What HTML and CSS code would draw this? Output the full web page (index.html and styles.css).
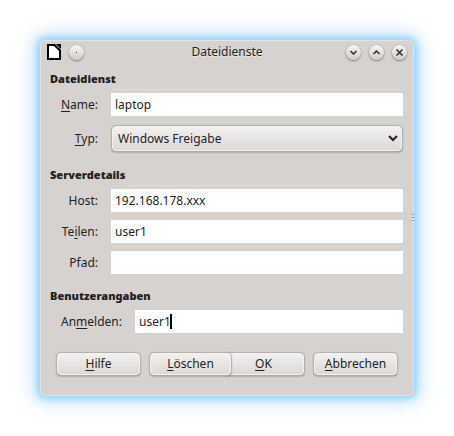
FILE: index.html
```html
<!DOCTYPE html>
<html lang="de">
<head>
<meta charset="utf-8">
<title>Dateidienste</title>
<link rel="stylesheet" href="styles.css">
</head>
<body>
<main class="dialog">
  <header class="titlebar">
    <div class="window-menu">
      <svg class="app-icon" viewBox="0 0 14 16" aria-hidden="true">
        <path fill="#000" d="M0 0h14v16H0z"/>
        <path fill="#fff" d="M2 2h5l5 5v7H2z"/>
        <path fill="#d6d2cf" d="M8 0h1l5 5v1z"/>
      </svg>
      <button class="round" type="button" aria-label="Fenstermenü"><svg viewBox="0 0 15 15"><path fill="#333" d="M7 7h1v1H7z"/></svg></button>
    </div>
    <h1 class="title">Dateidienste</h1>
    <div class="window-buttons">
      <button class="round" type="button" aria-label="Minimieren"><svg viewBox="0 0 15 15"><path class="stroke" d="M4.500 6l3 3 3-3"/></svg></button>
      <button class="round" type="button" aria-label="Maximieren"><svg viewBox="0 0 15 15"><path class="stroke" d="M4.500 9l3-3 3 3"/></svg></button>
      <button class="round" type="button" aria-label="Schließen"><svg viewBox="0 0 15 15"><path class="stroke" d="M4.500 4.500l6 6M10.500 4.500l-6 6"/></svg></button>
    </div>
  </header>
  <form class="content">
    <section class="group">
      <h2 class="heading">Dateidienst</h2>
      <div class="row"><label class="label" for="name"><u>N</u>ame:</label><input class="field" id="name" type="text" value="laptop"></div>
      <div class="row">
        <label class="label" for="type"><u>T</u>yp:</label>
        <div class="combo">
          <select class="select" id="type"><option>Windows Freigabe</option></select>
          <svg class="arrow" viewBox="0 0 10 8" aria-hidden="true"><path d="M1 2l4 4 4-4"/></svg>
        </div>
      </div>
    </section>
    <section class="group">
      <h2 class="heading">Serverdetails</h2>
      <div class="row"><label class="label" for="host">Host:</label><input class="field" id="host" type="text" value="192.168.178.xxx"></div>
      <div class="row"><label class="label" for="share">Te<u>i</u>len:</label><input class="field" id="share" type="text" value="user1"></div>
      <div class="row"><label class="label" for="path">Pfad:</label><input class="field" id="path" type="text"></div>
    </section>
    <section class="group">
      <h2 class="heading">Benutzerangaben</h2>
      <div class="row row-wide">
        <label class="label" for="login">An<u>m</u>elden:</label>
        <div class="login"><input class="field" id="login" type="text" value="user1"><span class="caret"></span></div>
      </div>
    </section>
    <footer class="actions">
      <button class="button" type="button"><u>H</u>ilfe</button>
      <div class="joined">
        <button class="button button-front" type="button"><u>L</u>öschen</button>
        <button class="button button-ok" type="submit"><u>O</u>K</button>
      </div>
      <button class="button" type="button"><u>A</u>bbrechen</button>
    </footer>
  </form>
  <span class="grip"></span>
</main>
</body>
</html>
```
FILE: styles.css
```css
* {
  box-sizing: border-box;
}

body {
  margin: 0;
  padding: 40px;
  background: #fff;
  color: #221f1e;
  font: 12px/16px "Noto Sans", "Open Sans", sans-serif;
}

.dialog {
  position: relative;
  padding-bottom: 20px;
  border-radius: 5px;
  background: #d6d2cf;
  box-shadow: inset 0 0 0 1px #e6e4e2, 0 0 7px 2px #86d3ff, 0 0 16px 4px #bfe0ff, 0 0 30px 8px #edf3ff;
}

.titlebar {
  display: grid;
  grid-template-columns: 1fr auto 1fr;
  align-items: center;
  height: 24px;
  padding: 0 7px;
}

.window-menu,
.window-buttons {
  display: flex;
  align-items: center;
  gap: 8px;
}

.window-buttons {
  justify-content: flex-end;
}

.app-icon {
  width: 14px;
  height: 16px;
}

.title {
  margin: 0;
  font-size: 12px;
  font-weight: 400;
  line-height: 16px;
  text-shadow: 0 1px #eceae8;
}

.round {
  width: 15px;
  height: 15px;
  padding: 0;
  border: 0;
  border-radius: 50%;
  background: linear-gradient(#f7f6f5, #cfcbc8);
  box-shadow: 0 0 1px #8d8986, 0 1px 2px #7d7976;
}

.round svg {
  display: block;
}

.stroke {
  fill: none;
  stroke: #2d2b2a;
  stroke-width: 1.5;
}

.content {
  display: flex;
  flex-direction: column;
  gap: 14px;
  padding: 7px 11px 0 10px;
}

.group {
  display: grid;
  gap: 8px;
}

.heading {
  margin: 0 0 -2px;
  font-size: 11px;
  font-weight: 900;
  line-height: 16px;
}

.row {
  display: grid;
  grid-template-columns: 48px 1fr;
  align-items: center;
  gap: 13px;
}

.row-wide {
  grid-template-columns: 72px 1fr;
}

.label {
  text-align: right;
}

u {
  text-underline-offset: 2px;
}

.field {
  display: block;
  width: 100%;
  height: 23px;
  padding: 0 4px;
  border: 0;
  border-radius: 0;
  background: #fff;
  color: inherit;
  font: inherit;
}

.combo,
.login {
  position: relative;
}

.combo {
  padding: 2px 1px;
}

.select {
  display: block;
  width: 100%;
  height: 25px;
  padding: 0 5px;
  border: 1px solid #f3f2f1;
  border-radius: 4px;
  appearance: none;
  background: linear-gradient(#f2f1f0, #dcd9d6);
  box-shadow: 0 0 1px 1px #b3afac, 0 1px 2px #67635f;
  color: inherit;
  font: inherit;
}

.arrow {
  position: absolute;
  top: 10px;
  right: 5px;
  width: 10px;
  height: 8px;
  fill: none;
  stroke: #222;
  stroke-width: 2;
  pointer-events: none;
}

.caret {
  position: absolute;
  top: 4px;
  left: 35px;
  width: 2px;
  height: 15px;
  background: #000;
}

.actions {
  display: flex;
  gap: 10px;
  margin: 6px 6px 1px 7px;
}

.joined {
  display: flex;
  flex: 156 1 0;
}

.button {
  flex: 82 1 0;
  min-width: 0;
  height: 22px;
  padding: 0;
  border: 1px solid #f3f2f1;
  border-radius: 4px;
  background: linear-gradient(#f2f1f0, #dcd9d6);
  box-shadow: 0 0 1px 1px #b3afac, 0 1px 2px #67635f;
  color: inherit;
  font: inherit;
}

.button-front {
  position: relative;
  z-index: 1;
}

.button-ok {
  margin-left: -8px;
}

.grip {
  position: absolute;
  top: 174px;
  right: 0;
  width: 2px;
  height: 8px;
  background: repeating-linear-gradient(#8b8784 0 1px, #eceae8 1px 3px);
}
```
